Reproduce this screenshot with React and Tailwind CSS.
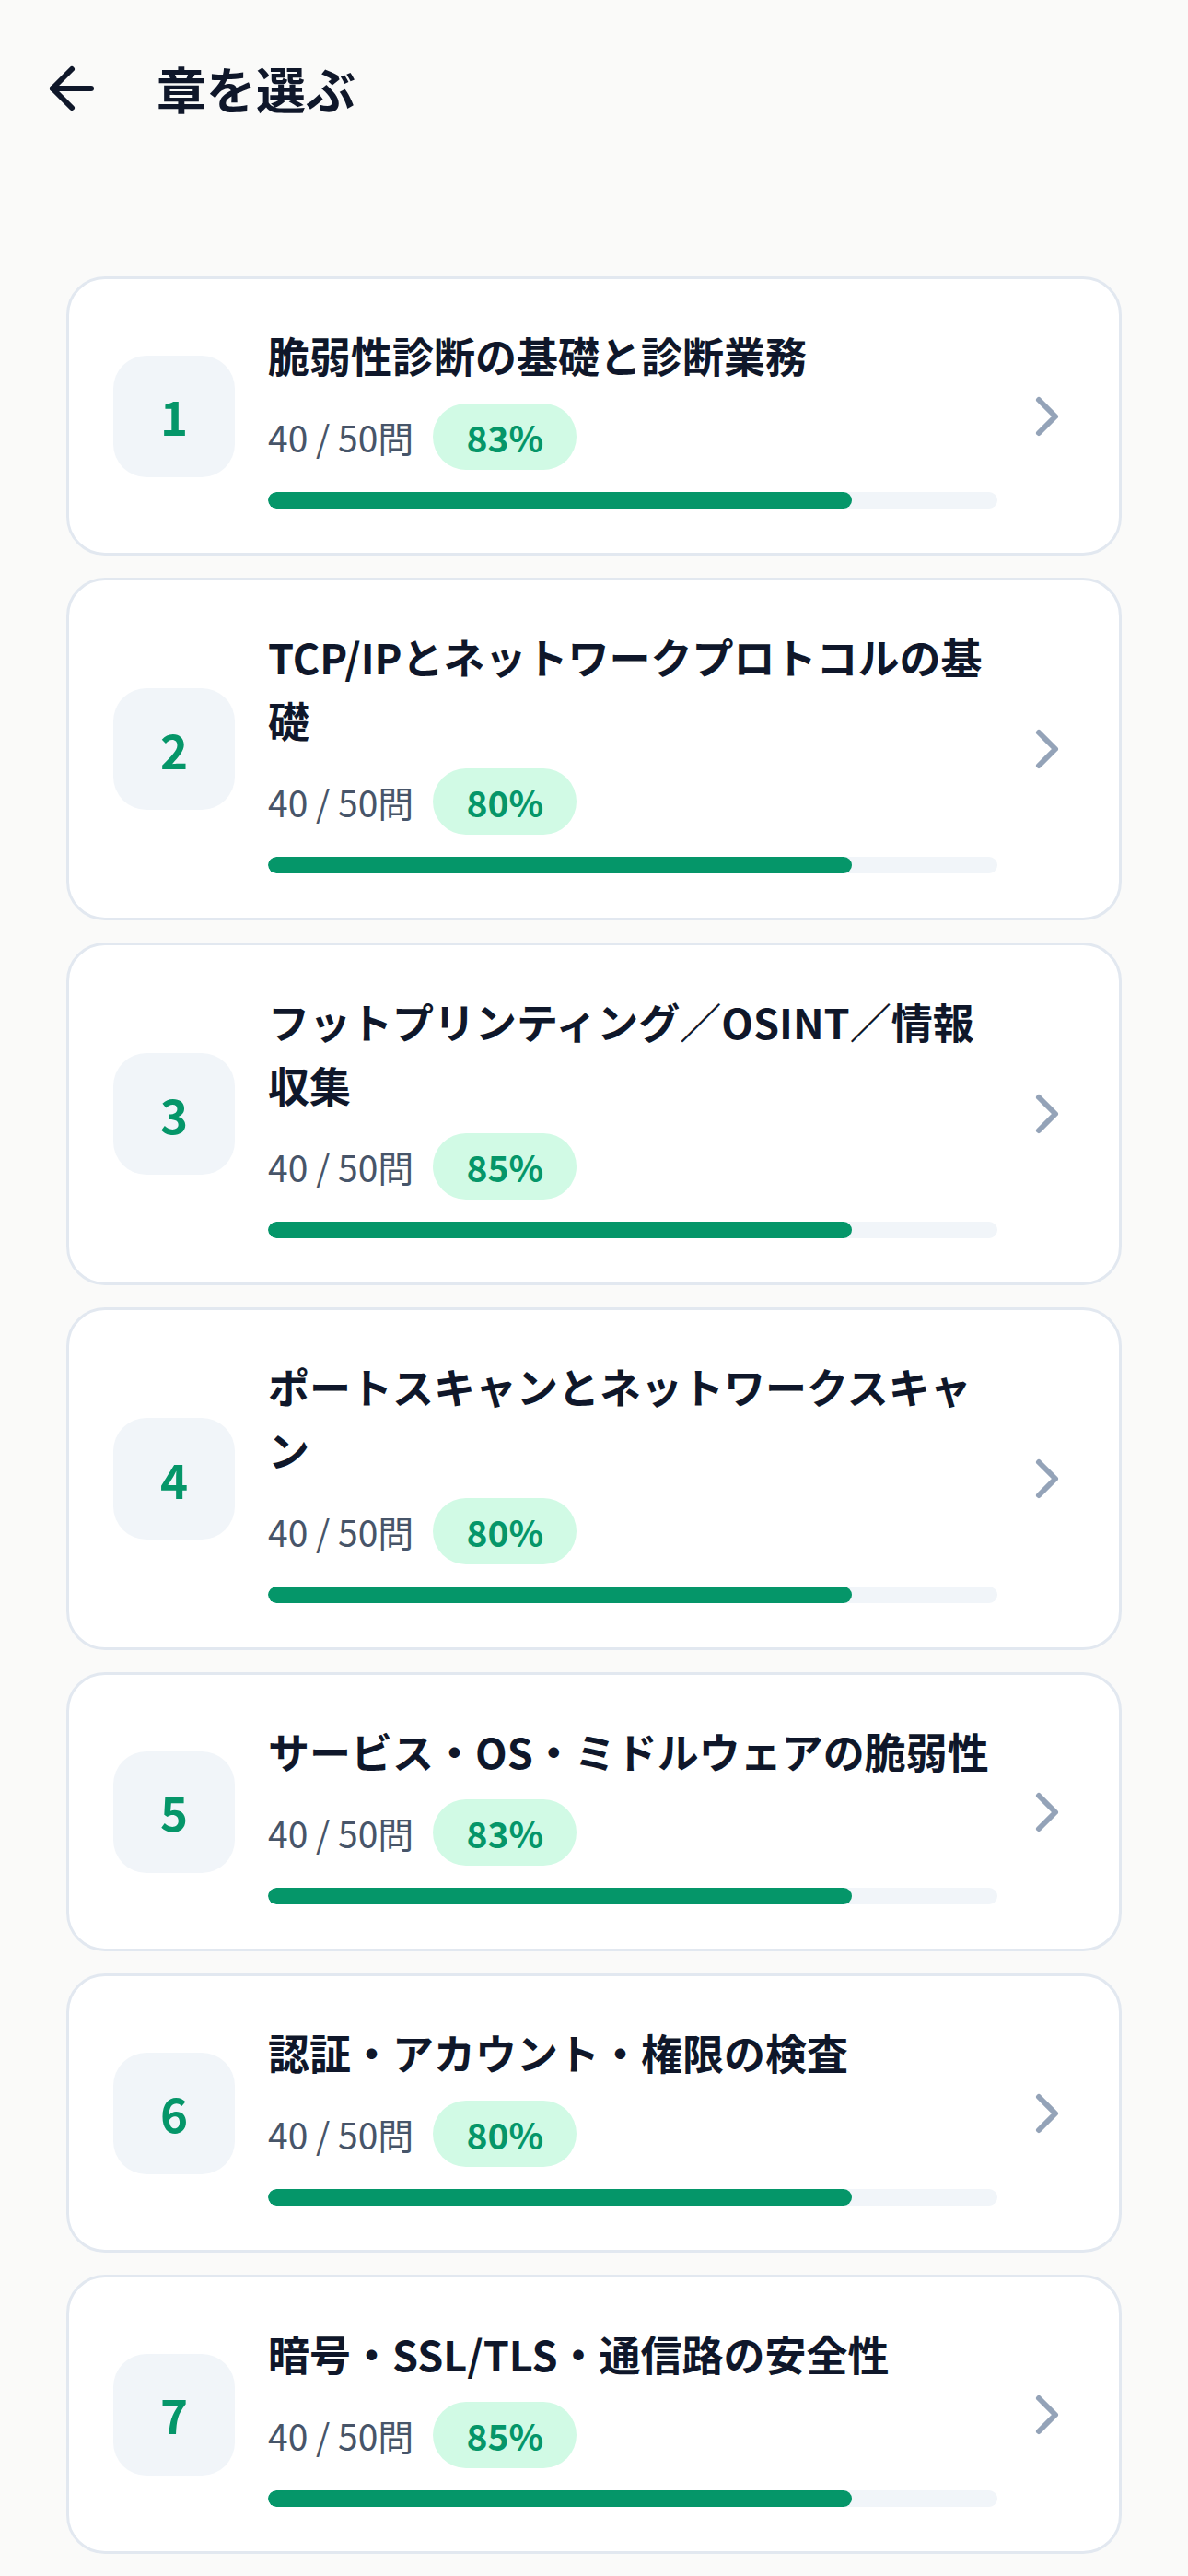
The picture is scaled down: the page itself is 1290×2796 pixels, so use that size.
import React from 'react';
import { ArrowLeft, ChevronRight } from 'lucide-react';

const chapters = [
  { no: 1, title: '脆弱性診断の基礎と診断業務', done: 40, total: 50, rate: 83 },
  { no: 2, title: 'TCP/IPとネットワークプロトコルの基礎', done: 40, total: 50, rate: 80 },
  { no: 3, title: 'フットプリンティング／OSINT／情報収集', done: 40, total: 50, rate: 85 },
  { no: 4, title: 'ポートスキャンとネットワークスキャン', done: 40, total: 50, rate: 80 },
  { no: 5, title: 'サービス・OS・ミドルウェアの脆弱性', done: 40, total: 50, rate: 83 },
  { no: 6, title: '認証・アカウント・権限の検査', done: 40, total: 50, rate: 80 },
  { no: 7, title: '暗号・SSL/TLS・通信路の安全性', done: 40, total: 50, rate: 85 },
];

const ChapterCard = ({ chapter }) => {
  const progress = (chapter.done / chapter.total) * 100;

  return (
    <div className="flex items-center bg-white border-[3px] border-[#e2e8f0] rounded-[42px] pl-[48px] pr-[42px] py-[48px]">
      {/* chapter number */}
      <div className="flex items-center justify-center shrink-0 w-[132px] h-[132px] rounded-[36px] bg-[#f1f5f9] text-[51px] font-bold text-[#059669]">
        {chapter.no}
      </div>

      <div className="flex-1 min-w-0 ml-[36px]">
        <h2 className="text-[45px] leading-[69px] font-bold text-[#0f172a]">{chapter.title}</h2>
        <div className="flex items-center gap-[21px] mt-[18px]">
          <span className="text-[39px] text-[#475569]">
            {chapter.done} / {chapter.total}問
          </span>
          <span className="flex items-center h-[72px] px-[36px] rounded-full bg-[#d1fae5] text-[39px] font-bold text-[#059669]">
            {chapter.rate}%
          </span>
        </div>
        <div className="mt-[24px] h-[18px] rounded-full bg-[#f1f5f9] overflow-hidden">
          <div className="h-full rounded-full bg-[#059669]" style={{ width: `${progress}%` }} />
        </div>
      </div>

      <ChevronRight size={72} strokeWidth={2} className="shrink-0 ml-[18px] text-[#94a3b8]" />
    </div>
  );
};

const App = () => {
  return (
    <div className="min-h-screen bg-[#fafaf9] pb-[24px] font-[family-name:'Noto_Sans_CJK_JP','Noto_Sans',sans-serif]">
      {/* header */}
      <div className="flex items-center gap-[56px] pt-[60px] pl-[42px]">
        <ArrowLeft size={72} strokeWidth={2} className="shrink-0 text-[#0f172a]" />
        <h1 className="text-[54px] leading-[72px] font-bold text-[#0f172a]">章を選ぶ</h1>
      </div>

      {/* chapter list */}
      <div className="flex flex-col gap-[24px] mt-[168px] px-[72px]">
        {chapters.map((chapter) => (
          <ChapterCard key={chapter.no} chapter={chapter} />
        ))}
      </div>
    </div>
  );
};

export default App;
